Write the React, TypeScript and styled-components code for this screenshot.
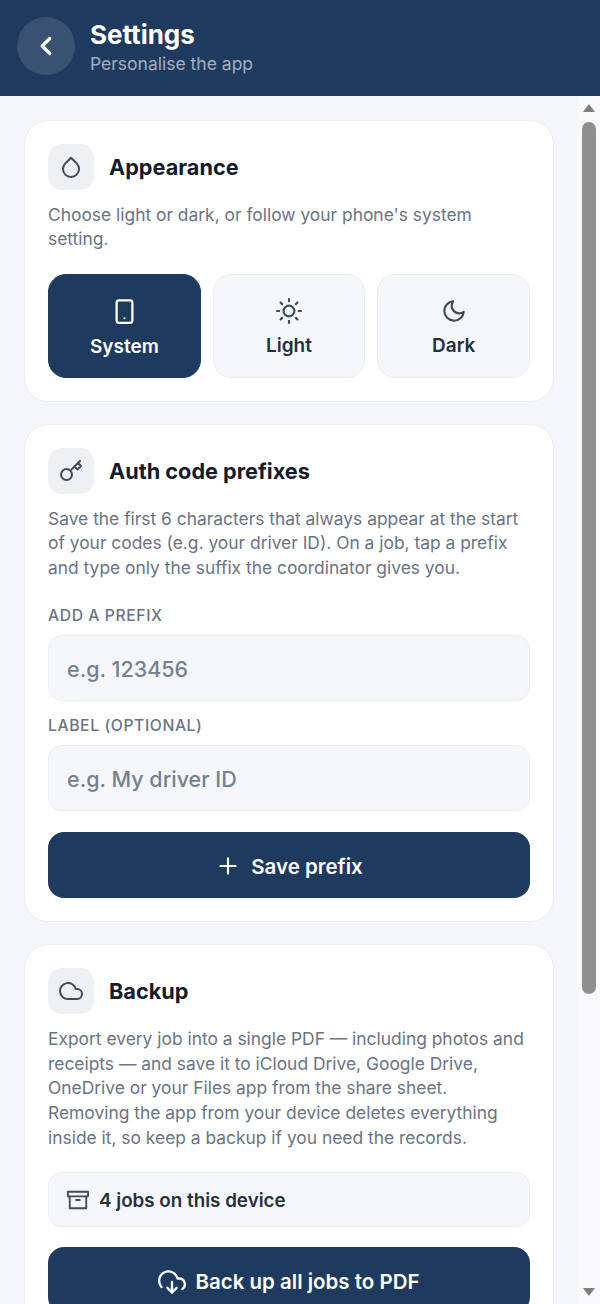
import React from "react";
import styled, { createGlobalStyle } from "styled-components";
import { FiChevronLeft, FiDroplet, FiSmartphone, FiSun, FiMoon, FiKey, FiPlus, FiCloud, FiArchive, FiDownloadCloud } from "react-icons/fi";

const Global = createGlobalStyle`
  html, body { margin: 0; padding: 0; height: 100%; overflow: hidden; }
  #root { height: 100%; }
  * { box-sizing: border-box; }
  body { font-family: Inter, "Liberation Sans", sans-serif; background: #f4f6fa; }
`;
const Screen = styled.div`height: 1304px; display: flex; flex-direction: column;`;
const Header = styled.header`
  height: 96px; flex: none; background: #1e3a5f; display: flex; align-items: center; gap: 15px; padding: 0 17px 4px;
`;
const BackButton = styled.button`
  width: 58px; height: 58px; border-radius: 50%; border: 0; padding: 0; background: rgba(255,255,255,.12); color: #fff;
  display: flex; align-items: center; justify-content: center;
`;
const HeaderText = styled.div`display: flex; flex-direction: column; gap: 1px; padding-top: 2px;`;
const HeaderTitle = styled.h1`margin: 0; font-size: 26px; line-height: 32px; font-weight: 700; color: #fff;`;
const HeaderSub = styled.div`font-size: 17.5px; line-height: 24px; color: rgba(255,255,255,.6);`;
const Body = styled.div`flex: 1; min-height: 0; display: flex;`;
const Scroller = styled.main`
  flex: 1; min-width: 0; overflow: hidden; padding: 24px 23px 24px 24px; display: flex; flex-direction: column; gap: 22px;
`;
const Rail = styled.div`
  flex: none; width: 23px; background: #f9f9fb; display: flex; flex-direction: column; align-items: center; padding: 8px 0;
`;
const ArrowUp = styled.div`
  width: 0; height: 0; border-left: 6.5px solid transparent; border-right: 6.5px solid transparent; border-bottom: 8px solid #808080;
`;
const ArrowDown = styled(ArrowUp)`
  border-bottom: 0; border-top: 8px solid #808080; margin-top: auto;
`;
const Thumb = styled.div`
  width: 14px; height: 872px; margin-top: 10px; border-radius: 7px; background: #8f8f8f;
`;
const Card = styled.section`
  flex: none; background: #fff; border: 1px solid #eaedf2; border-radius: 24px; padding: 23px;
`;
const CardHead = styled.div`display: flex; align-items: center; gap: 15px; margin-bottom: 12.5px;`;
const IconBox = styled.div`
  width: 46px; height: 46px; border-radius: 14px; background: #eef0f4; color: #3f4a5c;
  display: flex; align-items: center; justify-content: center;
`;
const CardTitle = styled.h2`margin: 0; font-size: 21.7px; font-weight: 700; color: #141b2b;`;
const Desc = styled.p`margin: 0; font-size: 17.4px; line-height: 24.75px; color: #6b7483;`;
const Options = styled.div`display: grid; grid-template-columns: repeat(3, 1fr); gap: 12px; margin-top: 22px;`;
const Option = styled.button<{ $active?: boolean }>`
  height: 104px; border-radius: 18px; padding: 3px 0 0; font: 600 19px Inter, sans-serif;
  border: 1px solid ${p => (p.$active ? "#1e3a5f" : "#eaedf2")};
  background: ${p => (p.$active ? "#1e3a5f" : "#f5f7fa")};
  color: ${p => (p.$active ? "#fff" : "#272f3d")};
  display: flex; flex-direction: column; align-items: center; justify-content: center; gap: 10px;
  svg { color: ${p => (p.$active ? "#fff" : "#3f4a5c")}; }
`;
const Label = styled.label`
  display: block; margin: 26.5px 0 10px; font-size: 15.7px; line-height: 18px; font-weight: 500; letter-spacing: .6px; color: #6b7483; text-transform: uppercase;
`;
const CompactLabel = styled(Label)`margin-top: 16px;`;
const Input = styled.input`
  display: block; width: 100%; height: 66px; border-radius: 14px; border: 1px solid #eaedf2; background: #f5f7fa; padding: 2px 18px 0;
  font: 500 21.5px Inter, sans-serif; outline: 0;
  &::placeholder { color: #75808f; opacity: 1; }
`;
const PrimaryButton = styled.button`
  width: 100%; height: 66px; border: 0; border-radius: 16px; background: #1e3a5f; color: #fff; margin-top: 21px; padding: 2px 0 0;
  font: 600 20.5px Inter, sans-serif; display: flex; align-items: center; justify-content: center; gap: 10px;
`;
const CountRow = styled.div`
  height: 55px; margin-top: 21px; border: 1px solid #eaedf2; border-radius: 14px; background: #f5f7fa; padding: 2px 18px 0;
  display: flex; align-items: center; gap: 10px; font-size: 18.8px; font-weight: 600; color: #272f3d;
  svg { color: #3f4a5c; }
`;
const BackupButton = styled(PrimaryButton)`margin-top: 20px; gap: 9px; padding-top: 4px;`;

export default function App() {
  return (
    <Screen>
      <Global />
      <Header>
        <BackButton aria-label="Back"><FiChevronLeft size={30} strokeWidth={2.6} /></BackButton>
        <HeaderText>
          <HeaderTitle>Settings</HeaderTitle>
          <HeaderSub>Personalise the app</HeaderSub>
        </HeaderText>
      </Header>
      <Body>
        <Scroller>
          <Card>
            <CardHead><IconBox><FiDroplet size={24} /></IconBox><CardTitle>Appearance</CardTitle></CardHead>
            <Desc>Choose light or dark, or follow your phone's system setting.</Desc>
            <Options>
              <Option $active><FiSmartphone size={27} />System</Option>
              <Option><FiSun size={26} />Light</Option>
              <Option><FiMoon size={26} />Dark</Option>
            </Options>
          </Card>
          <Card>
            <CardHead><IconBox><FiKey size={24} /></IconBox><CardTitle>Auth code prefixes</CardTitle></CardHead>
            <Desc>Save the first 6 characters that always appear at the start of your codes (e.g. your driver ID). On a job, tap a prefix and type only the suffix the coordinator gives you.</Desc>
            <Label>Add a prefix</Label>
            <Input placeholder="e.g. 123456" />
            <CompactLabel>Label (optional)</CompactLabel>
            <Input placeholder="e.g. My driver ID" />
            <PrimaryButton><FiPlus size={26} />Save prefix</PrimaryButton>
          </Card>
          <Card>
            <CardHead><IconBox><FiCloud size={24} /></IconBox><CardTitle>Backup</CardTitle></CardHead>
            <Desc>Export every job into a single PDF — including photos and receipts — and save it to iCloud Drive, Google Drive, OneDrive or your Files app from the share sheet. Removing the app from your device deletes everything inside it, so keep a backup if you need the records.</Desc>
            <CountRow><FiArchive size={22} />4 jobs on this device</CountRow>
            <BackupButton><FiDownloadCloud size={28} />Back up all jobs to PDF</BackupButton>
          </Card>
        </Scroller>
        <Rail aria-hidden="true">
          <ArrowUp />
          <Thumb />
          <ArrowDown />
        </Rail>
      </Body>
    </Screen>
  );
}
